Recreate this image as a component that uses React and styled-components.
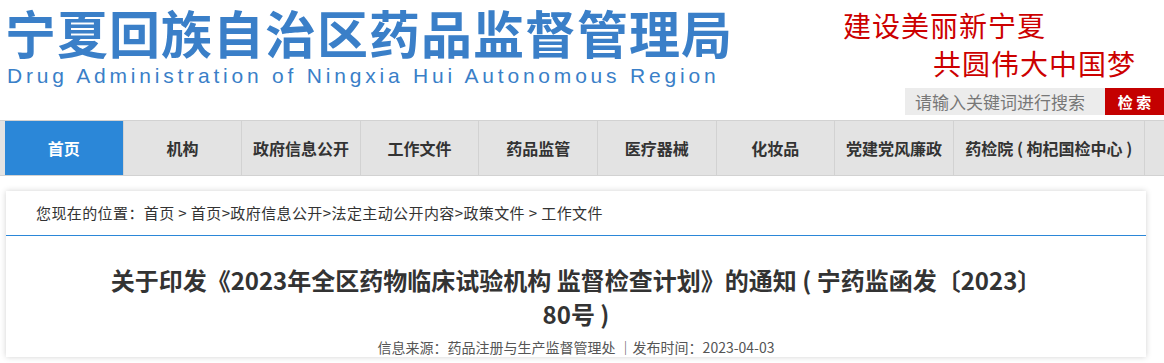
import styled, { createGlobalStyle } from "styled-components";

const GlobalStyle = createGlobalStyle`
  body {
    margin: 0;
    background: #fff;
    font-family: "Noto Sans CJK SC", "Noto Sans", sans-serif;
  }
`;

const Page = styled.div`
  width: 1164px;
  height: 363px;
  overflow: hidden;
`;

const Header = styled.div`
  display: flex;
  justify-content: space-between;
  height: 120px;
`;

const Logo = styled.div`
  flex-shrink: 0;
  padding: 0 0 0 5px;
`;

const LogoCn = styled.div`
  font-size: 51px;
  font-weight: 700;
  color: #3a7fc8;
  letter-spacing: 1px;
  line-height: 64px;
  height: 64px;
  white-space: nowrap;
`;

const LogoEn = styled.div`
  font-family: "Liberation Sans", Arial, sans-serif;
  font-size: 21px;
  color: #3a7fc8;
  letter-spacing: 3.8px;
  line-height: 24px;
  padding-left: 2px;
  white-space: nowrap;
`;

const Right = styled.div`
  display: flex;
  flex-direction: column;
  align-items: flex-end;
`;

const Slogan = styled.div`
  color: #cc0000;
  font-size: 28px;
  line-height: 38px;
  letter-spacing: 1px;
  white-space: nowrap;
  padding-right: ${(p) => p.$pr}px;
  margin-top: ${(p) => p.$mt || 0}px;
`;

const Search = styled.div`
  display: flex;
  margin-top: 6px;
  height: 27px;
`;

const SearchInput = styled.div`
  width: 190px;
  padding-left: 10px;
  background: #ececec;
  color: #777;
  font-size: 17px;
  line-height: 27px;
  white-space: nowrap;
`;

const SearchBtn = styled.div`
  width: 59px;
  background: #c40000;
  color: #fff;
  font-size: 15px;
  font-weight: 700;
  text-align: center;
  line-height: 27px;
  white-space: pre;
`;

const Nav = styled.div`
  display: flex;
  background: #e3e3e3;
  border-top: 1px solid #d2d2d2;
  border-bottom: 1px solid #d2d2d2;
  padding-left: 5px;
  height: 54px;
`;

const NavItem = styled.div`
  box-sizing: border-box;
  width: ${(p) => p.$w || 118.6}px;
  border-right: 1px solid #d2d2d2;
  display: flex;
  align-items: center;
  justify-content: center;
  font-size: 16px;
  font-weight: 700;
  white-space: pre;
  color: ${(p) => (p.$active ? "#fff" : "#333")};
  background: ${(p) => (p.$active ? "#2b87d8" : "transparent")};
`;

const Box = styled.div`
  margin: 15px 0 0 6px;
  width: 1140px;
  background: #fff;
  box-shadow: 0 0 6px rgba(0, 0, 0, 0.18);
`;

const Crumb = styled.div`
  padding-left: 30px;
  height: 44px;
  line-height: 44px;
  font-size: 15px;
  letter-spacing: 0.4px;
  color: #333;
  border-bottom: 1px solid #2b87d8;
  white-space: pre;
`;

const Title = styled.h1`
  margin: 0;
  padding: 27px 90px 0;
  text-align: center;
  font-size: 24px;
  font-weight: 700;
  line-height: 34px;
  color: #333;
`;

const NoWrap = styled.span`
  white-space: nowrap;
`;

const Meta = styled.div`
  margin-top: 6px;
  text-align: center;
  font-size: 14px;
  color: #555;
`;

const navs = [
  "首页",
  "机构",
  "政府信息公开",
  "工作文件",
  "药品监管",
  "医疗器械",
  "化妆品",
  "党建党风廉政",
];

export default function App() {
  return (
    <Page>
      <GlobalStyle />
      <Header>
        <Logo>
          <LogoCn>宁夏回族自治区药品监督管理局</LogoCn>
          <LogoEn>Drug Administration of Ningxia Hui Autonomous Region</LogoEn>
        </Logo>
        <Right>
          <Slogan $pr={118} $mt={6}>建设美丽新宁夏</Slogan>
          <Slogan $pr={28}>共圆伟大中国梦</Slogan>
          <Search>
            <SearchInput>请输入关键词进行搜索</SearchInput>
            <SearchBtn>检 索</SearchBtn>
          </Search>
        </Right>
      </Header>
      <Nav>
        {navs.map((n, i) => (
          <NavItem key={n} $active={i === 0}>
            {n}
          </NavItem>
        ))}
        <NavItem $w={191}>药检院 ( 枸杞国检中心 )</NavItem>
      </Nav>
      <Box>
        <Crumb>
          您现在的位置：首页 &gt; 首页&gt;政府信息公开&gt;法定主动公开内容&gt;政策文件 &gt; 工作文件
        </Crumb>
        <Title>
          关于印发《2023年全区药物临床试验机构 监督检查计划》的通知 ( 宁药监函发〔2023〕
          <NoWrap>80号 )</NoWrap>
        </Title>
        <Meta>信息来源：药品注册与生产监督管理处 ｜发布时间：2023-04-03</Meta>
      </Box>
    </Page>
  );
}
